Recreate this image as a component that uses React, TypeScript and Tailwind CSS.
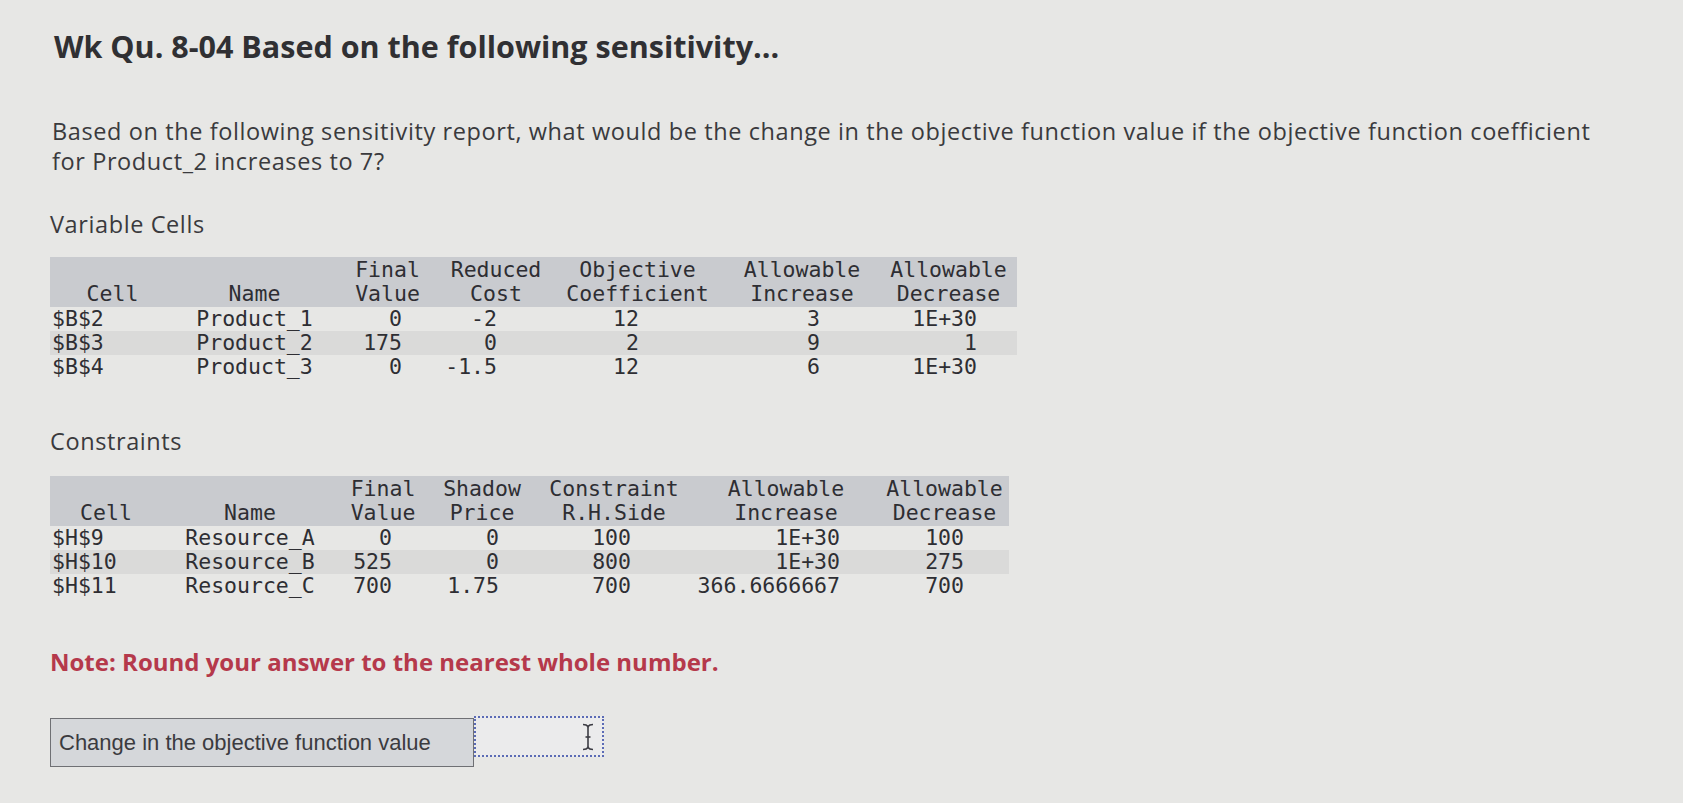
import React from "react";

type Col = {
  w: string;
  head: [string, string];
  cell: string;
};

const varCols: Col[] = [
  { w: "w-[125px]", head: ["", "Cell"], cell: "text-left pl-[2px]" },
  { w: "w-[159px]", head: ["", "Name"], cell: "text-center" },
  { w: "w-[107px]", head: ["Final", "Value"], cell: "text-right pr-[39px]" },
  { w: "w-[110px]", head: ["Reduced", "Cost"], cell: "text-right pr-[54px]" },
  { w: "w-[173px]", head: ["Objective", "Coefficient"], cell: "text-right pr-[85px]" },
  { w: "w-[156px]", head: ["Allowable", "Increase"], cell: "text-right pr-[60px]" },
  { w: "w-[137px]", head: ["Allowable", "Decrease"], cell: "text-right pr-[40px]" },
];

const varRows = [
  ["$B$2", "Product_1", "0", "-2", "12", "3", "1E+30"],
  ["$B$3", "Product_2", "175", "0", "2", "9", "1"],
  ["$B$4", "Product_3", "0", "-1.5", "12", "6", "1E+30"],
];

const conCols: Col[] = [
  { w: "w-[112px]", head: ["", "Cell"], cell: "text-left pl-[2px]" },
  { w: "w-[176px]", head: ["", "Name"], cell: "text-center" },
  { w: "w-[90px]", head: ["Final", "Value"], cell: "text-right pr-[36px]" },
  { w: "w-[108px]", head: ["Shadow", "Price"], cell: "text-right pr-[37px]" },
  { w: "w-[156px]", head: ["Constraint", "R.H.Side"], cell: "text-right pr-[61px]" },
  { w: "w-[188px]", head: ["Allowable", "Increase"], cell: "text-right pr-[40px]" },
  { w: "w-[129px]", head: ["Allowable", "Decrease"], cell: "text-right pr-[45px]" },
];

const conRows = [
  ["$H$9", "Resource_A", "0", "0", "100", "1E+30", "100"],
  ["$H$10", "Resource_B", "525", "0", "800", "1E+30", "275"],
  ["$H$11", "Resource_C", "700", "1.75", "700", "366.6666667", "700"],
];

const Report = ({ cols, rows }: { cols: Col[]; rows: string[][] }) => {
  return (
    <div className="flex w-fit flex-col font-['DejaVu_Sans_Mono',monospace] text-[21.5px] text-[#2e2e33]">
      <div className="flex bg-[#c9cbcf] py-[1px] leading-[24px]">
        {cols.map((c, i) => (
          <div key={i} className={`${c.w} flex flex-col items-center`}>
            <span className="h-[24px] whitespace-pre">{c.head[0]}</span>
            <span className="h-[24px] whitespace-pre">{c.head[1]}</span>
          </div>
        ))}
      </div>
      {rows.map((r, ri) => (
        <div
          key={ri}
          className={`flex leading-[24px] ${ri === 1 ? "bg-[#dadad9]" : ""}`}
        >
          {r.map((v, ci) => (
            <div key={ci} className={`${cols[ci].w} ${cols[ci].cell} whitespace-pre`}>
              {v}
            </div>
          ))}
        </div>
      ))}
    </div>
  );
};

const IBeam = () => (
  <svg width="12" height="28" viewBox="0 0 12 28" fill="none" stroke="#3c3c44" strokeWidth="1.6">
    <path d="M1 1.5 C3 1.5 5 2 6 3.5 C7 2 9 1.5 11 1.5" />
    <path d="M6 3.5 V24.5" />
    <path d="M3.5 14 H8.5" />
    <path d="M1 26.5 C3 26.5 5 26 6 24.5 C7 26 9 26.5 11 26.5" />
  </svg>
);

export default function App() {
  return (
    <div className="h-screen w-full overflow-hidden bg-[#e7e7e5] pl-[50px] pt-[30px] font-['Open_Sans',sans-serif] text-[#3a3a3d]">
      <h1 className="pl-[4px] text-[30.5px] font-bold leading-[32px] text-[#303033]">
        Wk Qu. 8-04 Based on the following sensitivity...
      </h1>

      <p className="mt-[54px] max-w-[1600px] pl-[2px] text-[23.5px] leading-[30px] tracking-[0.6px]">
        Based on the following sensitivity report, what would be the change in the objective function value if the
        objective function coefficient
        <br />
        for Product_2 increases to 7?
      </p>

      <p className="mt-[33px] text-[23.5px] leading-[30px] tracking-[0.6px]">Variable Cells</p>

      <div className="mt-[18px]">
        <Report cols={varCols} rows={varRows} />
      </div>

      <p className="mt-[47px] text-[23.5px] leading-[30px] tracking-[0.6px]">Constraints</p>

      <div className="mt-[20px]">
        <Report cols={conCols} rows={conRows} />
      </div>

      <p className="mt-[49px] text-[24px] font-bold leading-[30px] text-[#b5394b]">
        Note: Round your answer to the nearest whole number.
      </p>

      <div className="mt-[41px] flex items-start">
        <div className="flex h-[49px] w-[424px] items-center border border-[#6f7074] bg-[#d5d7da] pl-[8px] font-['Liberation_Sans',Arial,sans-serif] text-[22px] text-[#3b3b3f]">
          Change in the objective function value
        </div>
        <div className="-mt-[2px] flex h-[41px] w-[130px] items-center justify-end border-2 border-dotted border-[#5b6bb5] bg-[#ebebec] pr-[8px]">
          <IBeam />
        </div>
      </div>
    </div>
  );
}
